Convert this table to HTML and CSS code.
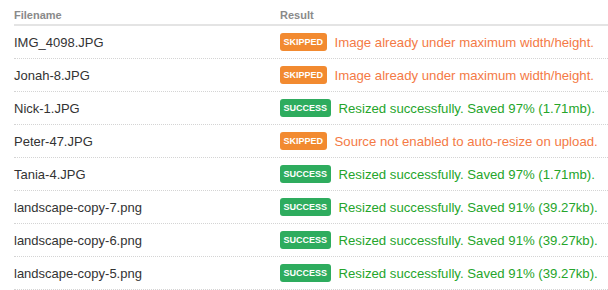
FILE: index.html
```html
<!DOCTYPE html>
<html>
<head>
<meta charset="utf-8">
<link rel="stylesheet" href="styles.css">
</head>
<body>
<div class="results">
  <div class="row head">
    <div class="c-name">Filename</div>
    <div class="c-result">Result</div>
  </div>
  <div class="row">
    <div class="c-name">IMG_4098.JPG</div>
    <div class="c-result"><span class="badge skipped">Skipped</span><span class="msg skipped">Image already under maximum width/height.</span></div>
  </div>
  <div class="row">
    <div class="c-name">Jonah-8.JPG</div>
    <div class="c-result"><span class="badge skipped">Skipped</span><span class="msg skipped">Image already under maximum width/height.</span></div>
  </div>
  <div class="row">
    <div class="c-name">Nick-1.JPG</div>
    <div class="c-result"><span class="badge success">Success</span><span class="msg success">Resized successfully. Saved 97% (1.71mb).</span></div>
  </div>
  <div class="row">
    <div class="c-name">Peter-47.JPG</div>
    <div class="c-result"><span class="badge skipped">Skipped</span><span class="msg skipped">Source not enabled to auto-resize on upload.</span></div>
  </div>
  <div class="row">
    <div class="c-name">Tania-4.JPG</div>
    <div class="c-result"><span class="badge success">Success</span><span class="msg success">Resized successfully. Saved 97% (1.71mb).</span></div>
  </div>
  <div class="row">
    <div class="c-name">landscape-copy-7.png</div>
    <div class="c-result"><span class="badge success">Success</span><span class="msg success">Resized successfully. Saved 91% (39.27kb).</span></div>
  </div>
  <div class="row">
    <div class="c-name">landscape-copy-6.png</div>
    <div class="c-result"><span class="badge success">Success</span><span class="msg success">Resized successfully. Saved 91% (39.27kb).</span></div>
  </div>
  <div class="row">
    <div class="c-name">landscape-copy-5.png</div>
    <div class="c-result"><span class="badge success">Success</span><span class="msg success">Resized successfully. Saved 91% (39.27kb).</span></div>
  </div>
</div>
</body>
</html>
```
FILE: styles.css
```css
html, body {
  margin: 0;
  padding: 0;
  background: #fff;
}
body {
  font-family: "Liberation Sans", Arial, sans-serif;
  color: #333;
  overflow: hidden;
}
.results {
  margin-left: 14px;
  width: 620px;
}
.row {
  display: flex;
  align-items: center;
  height: 32px;
  border-bottom: 1px dotted #d4d4d4;
  font-size: 13px;
  white-space: nowrap;
}
.row.head {
  height: 26px;
  box-sizing: border-box;
  align-items: flex-end;
  padding-bottom: 3px;
  border-bottom: 2px solid #e4e4e4;
  font-size: 11px;
  font-weight: bold;
  color: #8a8a8a;
}
.c-name {
  width: 266px;
  flex: none;
}
.c-result {
  display: flex;
  align-items: center;
}
.badge {
  display: inline-flex;
  align-items: center;
  height: 18px;
  padding: 0 3.5px;
  border-radius: 3px;
  font-size: 9px;
  font-weight: bold;
  text-transform: uppercase;
  color: #fff;
  margin-right: 8px;
}
.badge.skipped { background: #f28a30; }
.badge.success { background: #2eac5e; }
.msg { font-size: 13.2px; }
.msg.skipped { color: #f47a45; }
.msg.success { color: #25a52b; }
```
